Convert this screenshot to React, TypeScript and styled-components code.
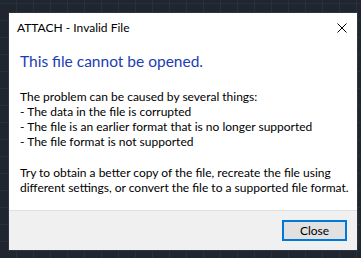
import React from "react";
import styled, { createGlobalStyle } from "styled-components";

const GlobalStyle = createGlobalStyle`
  html, body {
    margin: 0;
    padding: 0;
    width: 361px;
    height: 258px;
    overflow: hidden;
  }
  body {
    background-color: #1f2630;
    background-image:
      repeating-linear-gradient(90deg, transparent 0 16px, #28303a 16px 17px),
      repeating-linear-gradient(0deg, transparent 0 16px, #28303a 16px 17px);
    font-family: "Lato", "Noto Sans", sans-serif;
  }
`;

const Canvas = styled.div`
  padding: 13px 0 0 9px;
`;

const Dialog = styled.div`
  width: 348px;
  height: 237px;
  background: #ffffff;
  display: flex;
  flex-direction: column;
  box-shadow: 0 0 0 1px #2b3440;
`;

const TitleBar = styled.div`
  height: 29px;
  flex-shrink: 0;
  display: flex;
  align-items: center;
  justify-content: space-between;
  padding: 0 10px 0 8px;
  font-size: 12px;
  line-height: 15px;
  color: #000;
`;

const CloseX = styled.svg`
  width: 10px;
  height: 10px;
`;

const Body = styled.div`
  flex: 1;
  padding: 9px 8px 0 11px;
  color: #000;
  overflow: hidden;
`;

const Heading = styled.h1`
  margin: 0 0 18px;
  font-size: 15.5px;
  font-weight: 400;
  color: #1a3db4;
  line-height: 20px;
`;

const Para = styled.p<{ $gap?: number }>`
  margin: 0 0 ${(p) => p.$gap ?? 0}px;
  font-size: 12px;
  line-height: 15px;
  white-space: pre;
`;

const Footer = styled.div`
  height: 40px;
  flex-shrink: 0;
  box-sizing: border-box;
  background: #f0f0f0;
  border-top: 1px solid #dfdfdf;
  display: flex;
  align-items: center;
  justify-content: flex-end;
  padding-right: 10px;
`;

const Button = styled.button`
  width: 65px;
  height: 21px;
  box-sizing: border-box;
  background: #e1e1e1;
  border: 2px solid #0078d7;
  font-family: inherit;
  font-size: 12px;
  color: #000;
  padding: 0;
  display: flex;
  align-items: center;
  justify-content: center;
`;

const App = () => {
  return (
    <>
      <GlobalStyle />
      <Canvas>
        <Dialog>
          <TitleBar>
            <span>ATTACH - Invalid File</span>
            <CloseX viewBox="0 0 10 10">
              <path d="M0.5 0.5 L9.5 9.5 M9.5 0.5 L0.5 9.5" stroke="#000" strokeWidth="1" />
            </CloseX>
          </TitleBar>
          <Body>
            <Heading>This file cannot be opened.</Heading>
            <Para $gap={16}>
              {"The problem can be caused by several things:\n- The data in the file is corrupted\n- The file is an earlier format that is no longer supported\n- The file format is not supported"}
            </Para>
            <Para>
              {"Try to obtain a better copy of the file, recreate the file using\ndifferent settings, or convert the file to a supported file format."}
            </Para>
          </Body>
          <Footer>
            <Button>Close</Button>
          </Footer>
        </Dialog>
      </Canvas>
    </>
  );
};

export default App;
